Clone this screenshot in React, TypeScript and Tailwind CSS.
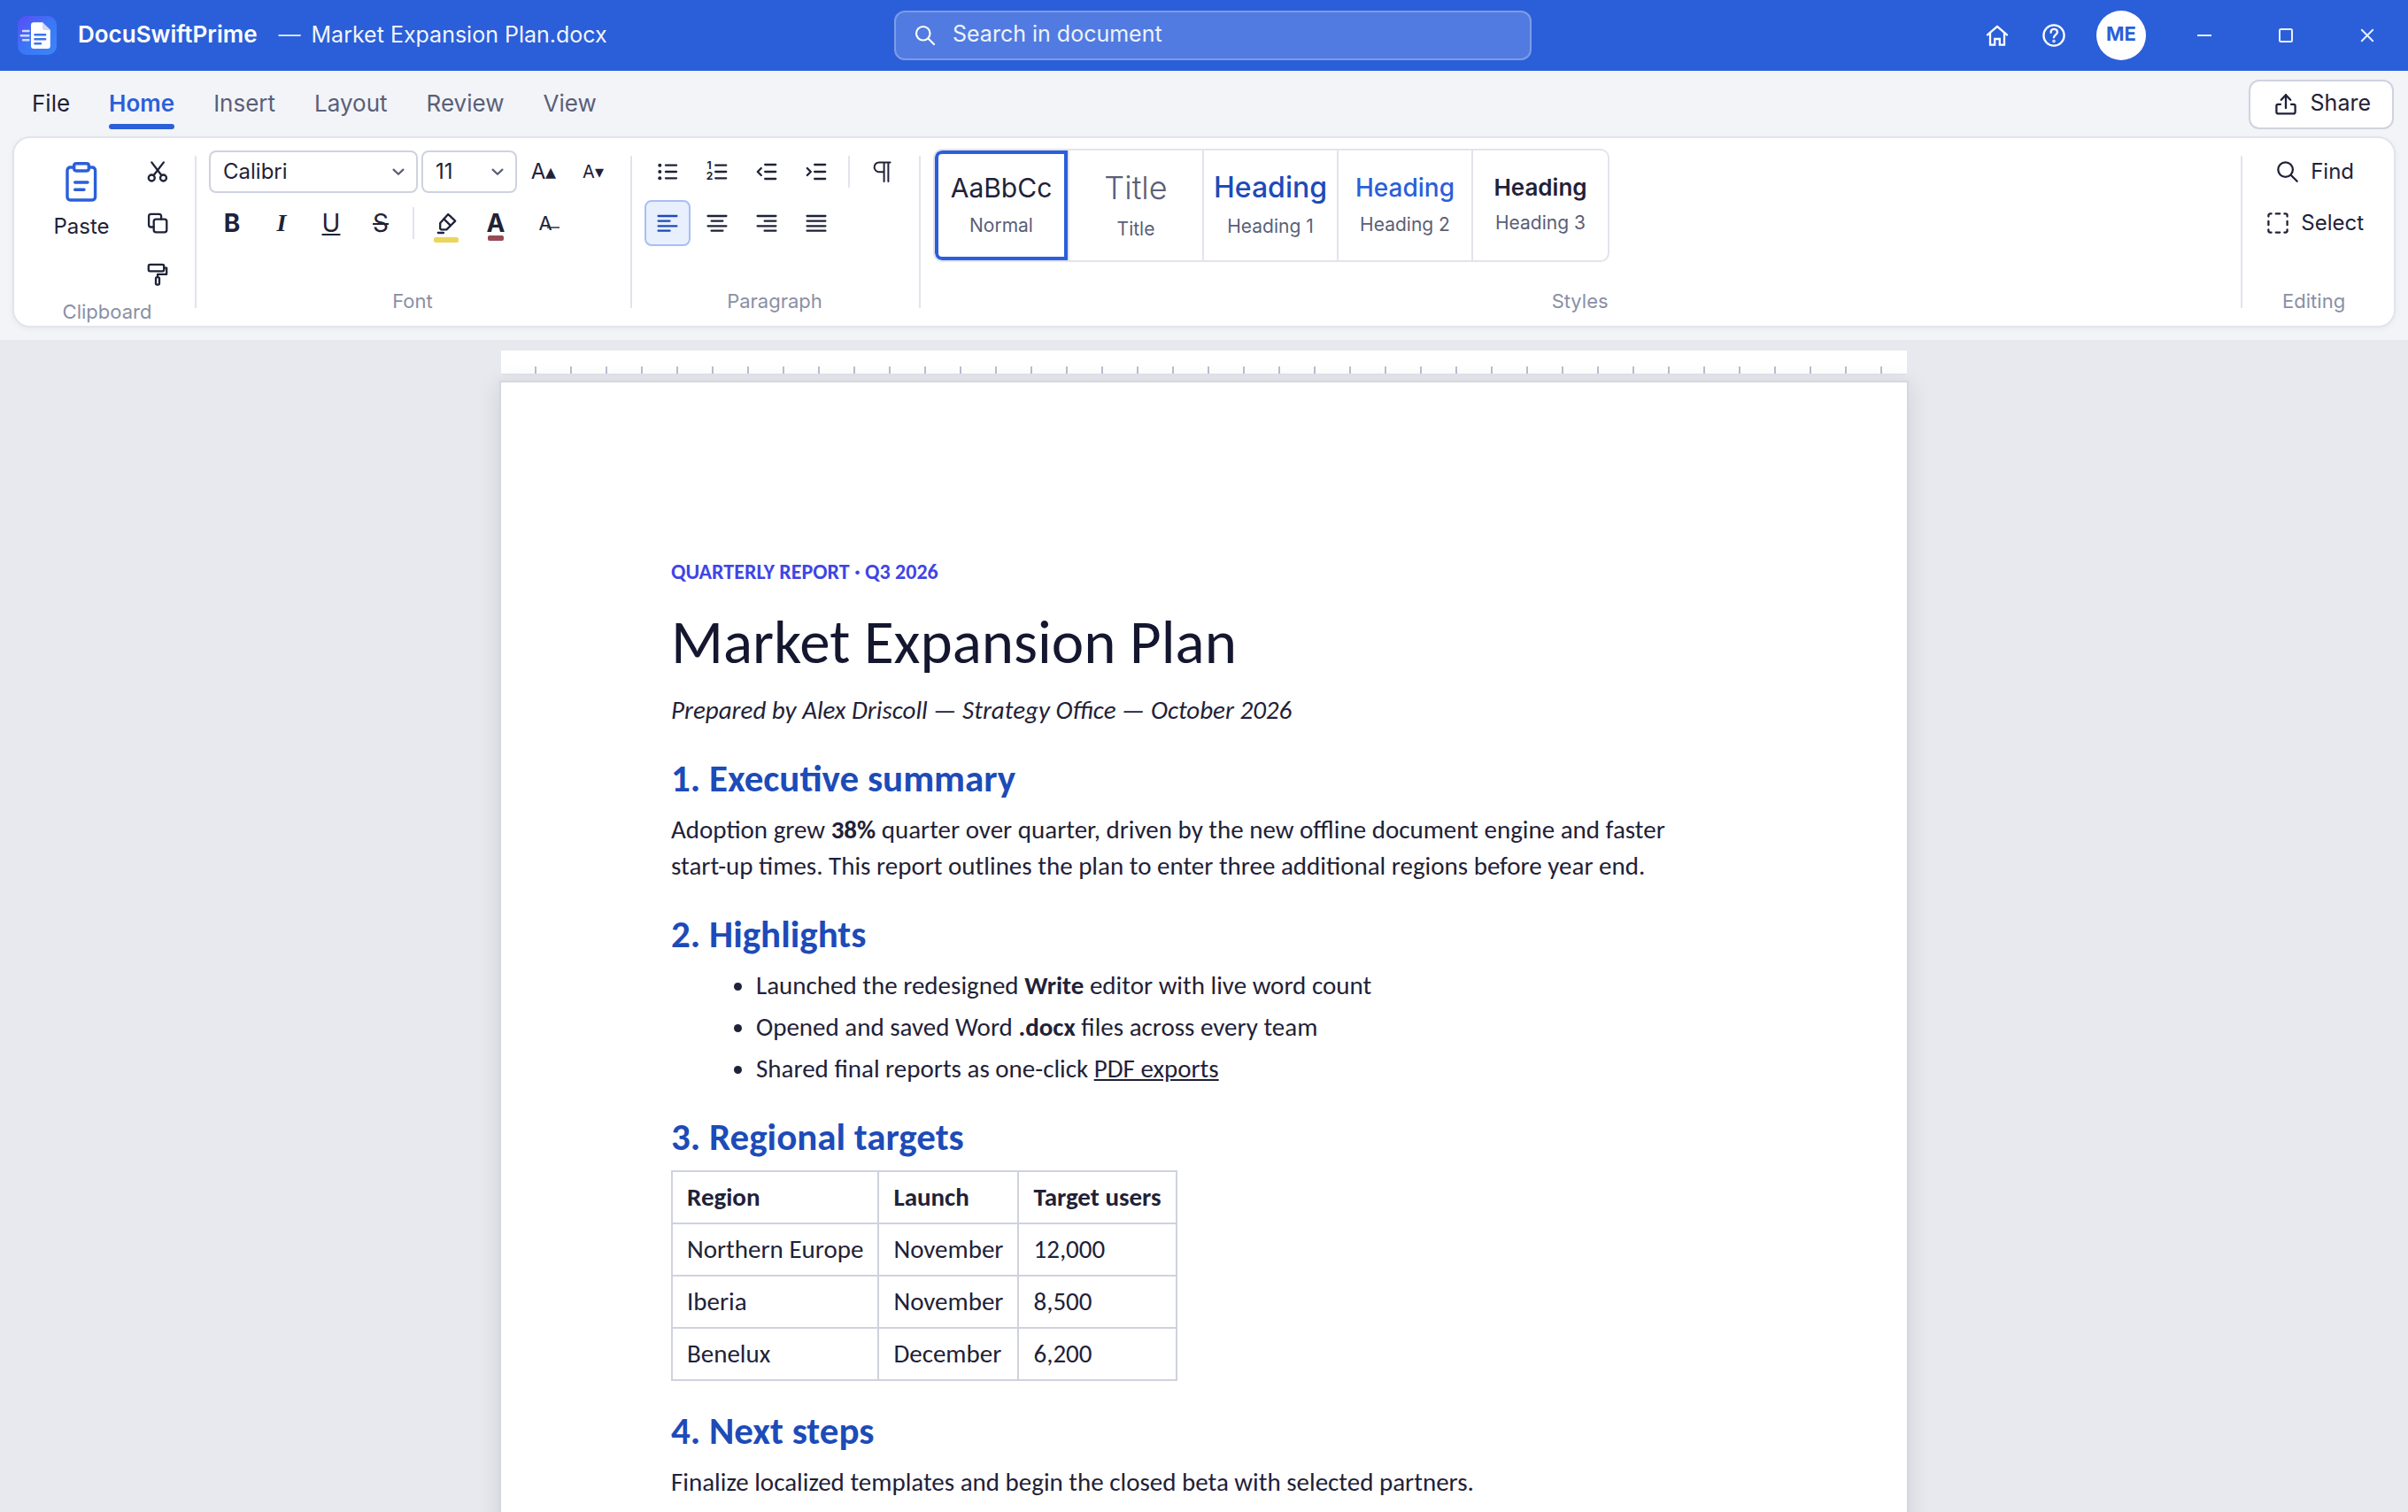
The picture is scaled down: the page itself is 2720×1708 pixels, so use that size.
import type { ReactNode } from "react"

const tabs = ["File", "Home", "Insert", "Layout", "Review", "View"]

const styles = [
  { sample: "AaBbCc", name: "Normal", className: "text-[30px] leading-[42px] text-[#1f2238]" },
  { sample: "Title", name: "Title", className: "text-[36px] leading-[50px] font-light text-[#5a5f78]" },
  { sample: "Heading", name: "Heading 1", className: "text-[32px] leading-[44px] font-medium text-[#1d4bb8]" },
  { sample: "Heading", name: "Heading 2", className: "text-[28px] leading-[40px] font-medium text-[#2b5fd9]" },
  { sample: "Heading", name: "Heading 3", className: "text-[26px] leading-[36px] font-semibold text-[#1f2238]" },
]

const regions = [
  ["Northern Europe", "November", "12,000"],
  ["Iberia", "November", "8,500"],
  ["Benelux", "December", "6,200"],
]

function Icon({ children, className = "size-8" }: { children: ReactNode; className?: string }) {
  return (
    <svg
      viewBox="0 0 32 32"
      fill="none"
      stroke="currentColor"
      strokeWidth="2.3"
      strokeLinecap="round"
      strokeLinejoin="round"
      className={`shrink-0 ${className}`}
      aria-hidden="true"
    >
      {children}
    </svg>
  )
}

function Logo() {
  return (
    <svg viewBox="0 0 44 44" className="size-11 shrink-0" aria-hidden="true">
      <defs>
        <linearGradient id="logo-bg" x1="0" y1="0" x2="1" y2="1">
          <stop offset="0" stopColor="#5b4bf7" />
          <stop offset="0.5" stopColor="#3b76f6" />
          <stop offset="1" stopColor="#3b86fb" />
        </linearGradient>
      </defs>
      <rect width="44" height="44" rx="10" fill="url(#logo-bg)" />
      <g stroke="#fff" strokeOpacity="0.75" strokeWidth="2.4" strokeLinecap="round">
        <path d="M6 17h6.5M3.8 22.3h8.7M6 27.3h6.5" />
      </g>
      <path d="M18 7.3h10l8.8 8.6v18.2a3 3 0 0 1-3 3H18a3 3 0 0 1-3-3V10.3a3 3 0 0 1 3-3Z" fill="#fff" />
      <path d="M28 7.3v6.6a2 2 0 0 0 2 2h6.8Z" fill="#d3d6fa" />
      <g stroke="#3b74ee" strokeWidth="2.4" strokeLinecap="round">
        <path d="M19.4 21.3h11.8M19.4 26.3h11.8M19.4 31.3h6.6" />
      </g>
    </svg>
  )
}

function SearchIcon({ className }: { className?: string }) {
  return (
    <Icon className={className}>
      <circle cx="13.6" cy="13.6" r="8.3" />
      <path d="m19.7 19.7 7 7" />
    </Icon>
  )
}

function Chevron() {
  return (
    <svg
      viewBox="0 0 16 16"
      fill="none"
      stroke="#5a5f78"
      strokeWidth="2.2"
      strokeLinecap="round"
      strokeLinejoin="round"
      className="pointer-events-none absolute right-3.5 top-4 size-4"
      aria-hidden="true"
    >
      <path d="m2.6 5.6 5.4 5.2 5.4-5.2" />
    </svg>
  )
}

function ToolButton({ label, active, children }: { label: string; active?: boolean; children: ReactNode }) {
  return (
    <button
      aria-label={label}
      aria-pressed={active}
      className={`relative flex size-13 items-center justify-center rounded-lg border-2 ${
        active ? "border-[#a9bff2] bg-[#e8effd] text-[#1d4bb8]" : "border-transparent"
      }`}
    >
      {children}
    </button>
  )
}

function Separator() {
  return <span className="mx-1.5 h-9 w-0.5 bg-[#e2e4ec]" />
}

function Divider() {
  return <div className="my-5 w-0.5 shrink-0 bg-[#e2e4ec]" />
}

function Group({ label, className = "pb-3", children }: { label: string; className?: string; children: ReactNode }) {
  return (
    <section aria-label={label} className={`flex flex-col pt-3 pl-3.5 pr-4 ${className}`}>
      <div className="flex-1">{children}</div>
      <div className="text-center text-[22px] leading-8 text-[#8a8fa5]">{label}</div>
    </section>
  )
}

function TitleBar() {
  return (
    <header className="flex h-20 items-center bg-[#2b5fd9] pl-5 text-white">
      <div className="flex flex-1 items-center">
        <Logo />
        <span className="ml-6 pb-0.5 text-[26px] leading-9 font-semibold">DocuSwiftPrime</span>
        <span className="ml-6 pb-0.5 text-[25px] leading-9 text-white/80">—</span>
        <span className="ml-3 pb-0.5 text-[25px] leading-9 text-white/95">Market Expansion Plan.docx</span>
      </div>

      <label className="flex h-14 w-[720px] items-center gap-4 rounded-xl border-2 border-white/25 bg-white/18 px-[18px]">
        <SearchIcon className="size-[30px]" />
        <input
          type="search"
          aria-label="Search in document"
          placeholder="Search in document"
          className="w-full bg-transparent pb-1 text-[25px] leading-9 outline-none placeholder:text-white/90"
        />
      </label>

      <div className="flex flex-1 items-center justify-end">
        <button aria-label="Home" className="flex size-14 items-center justify-center">
          <Icon>
            <path d="M5 15.4 16 5.8l11 9.6" />
            <path d="M8 13.4v13.2h5.2V20h5.6v6.6H24V13.4" strokeLinejoin="miter" />
          </Icon>
        </button>
        <button aria-label="Help" className="ml-2 flex size-14 items-center justify-center">
          <Icon>
            <circle cx="16" cy="16" r="11.6" />
            <path d="M12.6 12.8c0-2.4 1.5-3.9 3.6-3.9s3.7 1.4 3.7 3.4c0 2.8-3.9 3.2-3.9 6" />
            <circle cx="16" cy="22.4" r="0.6" />
          </Icon>
        </button>
        <button
          aria-label="Account"
          className="ml-5 mr-5 flex size-14 items-center justify-center rounded-full bg-white pb-1 text-[22px] leading-8 font-bold text-[#2b5fd9]"
        >
          ME
        </button>
        <div className="flex text-white/90">
          <button aria-label="Minimize" className="flex h-20 w-[92px] items-center justify-center">
            <svg viewBox="0 0 16 16" stroke="currentColor" strokeWidth="2" className="size-4">
              <path d="M0 8h16" />
            </svg>
          </button>
          <button aria-label="Maximize" className="flex h-20 w-[92px] items-center justify-center">
            <svg viewBox="0 0 16 16" fill="none" stroke="currentColor" strokeWidth="2" className="size-4">
              <rect x="1" y="1" width="14" height="14" rx="1.5" />
            </svg>
          </button>
          <button aria-label="Close" className="flex h-20 w-[92px] items-center justify-center">
            <svg viewBox="0 0 16 16" stroke="currentColor" strokeWidth="2" strokeLinecap="round" className="size-4">
              <path d="m1.8 1.8 12.4 12.4M14.2 1.8 1.8 14.2" />
            </svg>
          </button>
        </div>
      </div>
    </header>
  )
}

function TabRow() {
  return (
    <nav className="flex items-center justify-between pt-2.5 pb-2 pl-4 pr-4">
      <div className="flex gap-1">
        {tabs.map((tab) => (
          <button
            key={tab}
            aria-current={tab === "Home" ? "page" : undefined}
            className={`relative h-14 px-5 pb-0.5 text-[26px] leading-9 ${
              tab === "Home"
                ? "font-semibold text-[#2b5fd9] after:absolute after:inset-x-5 after:bottom-0 after:h-1.5 after:rounded-full after:bg-[#2b5fd9]"
                : tab === "File"
                  ? "text-[#1f2238]"
                  : "text-[#5a5f78]"
            }`}
          >
            {tab}
          </button>
        ))}
      </div>
      <button className="flex h-14 items-center gap-3 rounded-xl border-2 border-[#cfd2e0] bg-white px-6 text-[25px] leading-9">
        <Icon>
          <path d="M16 5.2V20M10.8 10.8 16 5.2l5.2 5.6" />
          <path d="M10 15.8H7.2a1.8 1.8 0 0 0-1.8 1.8v7a1.8 1.8 0 0 0 1.8 1.8h17.6a1.8 1.8 0 0 0 1.8-1.8v-7a1.8 1.8 0 0 0-1.8-1.8H22" />
        </Icon>
        <span className="pb-1">Share</span>
      </button>
    </nav>
  )
}

function ClipboardGroup() {
  return (
    <Group label="Clipboard" className="pb-0">
      <div className="flex gap-1.5">
        <button className="flex w-27 flex-col items-center gap-2 pt-3.5 text-[24px] leading-9">
          <svg
            viewBox="0 0 48 48"
            fill="none"
            stroke="#2b5fd9"
            strokeWidth="3.4"
            strokeLinecap="round"
            strokeLinejoin="round"
            className="size-12"
            aria-hidden="true"
          >
            <rect x="8" y="7" width="31.6" height="37" rx="3.4" />
            <rect x="15.7" y="2.7" width="16.6" height="8.3" rx="2.4" fill="#fff" />
            <path d="M16.7 24H31M16.7 32.3H27" />
          </svg>
          Paste
        </button>
        <div className="flex flex-col gap-1.5">
          <ToolButton label="Cut">
            <Icon>
              <circle cx="9.3" cy="23" r="3.5" />
              <circle cx="22.5" cy="23" r="3.5" />
              <path d="M9.3 5.4 20.4 20M22.9 5.4 11.6 20" />
            </Icon>
          </ToolButton>
          <ToolButton label="Copy">
            <Icon>
              <rect x="11.7" y="11.7" width="14.6" height="14.6" rx="2.6" />
              <path d="M11.6 20.5h-3a2.5 2.5 0 0 1-2.5-2.5V8.3a2.5 2.5 0 0 1 2.5-2.5h9a2.5 2.5 0 0 1 2.5 2.5v3.4" />
            </Icon>
          </ToolButton>
          <ToolButton label="Format painter">
            <Icon>
              <rect x="5.8" y="4.8" width="17.4" height="7.6" rx="1.6" />
              <path d="M23.2 8.6h3v7.2H16v3" />
              <rect x="14" y="19.2" width="4" height="8.4" rx="1.6" />
            </Icon>
          </ToolButton>
        </div>
      </div>
    </Group>
  )
}

function FontGroup() {
  return (
    <Group label="Font">
      <div className="flex flex-col gap-1.5">
        <div className="flex items-center gap-1">
          <div className="relative">
            <select
              aria-label="Font family"
              className="h-12 w-59 appearance-none rounded-lg border-2 border-[#cfd2e0] bg-white px-3.5 text-[24px]"
            >
              <option>Calibri</option>
            </select>
            <Chevron />
          </div>
          <div className="relative">
            <select
              aria-label="Font size"
              className="h-12 w-27 appearance-none rounded-lg border-2 border-[#cfd2e0] bg-white px-3.5 text-[24px]"
            >
              <option>11</option>
            </select>
            <Chevron />
          </div>
          <ToolButton label="Grow font">
            <span className="text-[24px] leading-8">A▴</span>
          </ToolButton>
          <ToolButton label="Shrink font">
            <span className="text-[20px] leading-8">A▾</span>
          </ToolButton>
        </div>
        <div className="flex items-center gap-1">
          <ToolButton label="Bold">
            <span className="text-[28px] leading-8 font-bold">B</span>
          </ToolButton>
          <ToolButton label="Italic">
            <span className="font-['Liberation_Serif',serif] text-[28px] leading-8 font-bold italic">I</span>
          </ToolButton>
          <ToolButton label="Underline">
            <span className="text-[28px] leading-8 underline">U</span>
          </ToolButton>
          <ToolButton label="Strikethrough">
            <span className="text-[28px] leading-8 line-through">S</span>
          </ToolButton>
          <Separator />
          <ToolButton label="Highlight color">
            <Icon>
              <path d="m18.2 6 8 7.6-9.8 9.8h-6l-1.2-1V16Z" />
              <path d="m13.4 11.4 7.4 7.2M6.8 27H13" />
            </Icon>
            <span className="absolute bottom-0.5 h-1.5 w-7 rounded-xs bg-[#ecd55b]" />
          </ToolButton>
          <ToolButton label="Font color">
            <span className="text-[28px] leading-8 font-bold">A</span>
            <span className="absolute bottom-1 h-1.5 w-[18px] rounded-xs bg-[#964a56]" />
          </ToolButton>
          <ToolButton label="Clear formatting">
            <span className="text-[22px] leading-8">A</span>
            <span className="absolute top-7 left-[26px] h-0.5 w-3.5 bg-[#1f2238]/70" />
          </ToolButton>
        </div>
      </div>
    </Group>
  )
}

function ParagraphGroup() {
  return (
    <Group label="Paragraph">
      <div className="flex flex-col gap-1.5">
        <div className="flex items-center gap-1">
          <ToolButton label="Bullets">
            <Icon>
              <path d="M14 8.7h12M14 16h12M14 23.3h12" />
              <g fill="currentColor" stroke="none">
                <circle cx="7.3" cy="8.7" r="2" />
                <circle cx="7.3" cy="16" r="2" />
                <circle cx="7.3" cy="23.3" r="2" />
              </g>
            </Icon>
          </ToolButton>
          <ToolButton label="Numbering">
            <Icon>
              <path d="M14.2 8.7h12M14.2 16h12M14.2 23.3h12" />
              <g fill="currentColor" stroke="none" fontSize="12" fontWeight="700">
                <text x="4.6" y="12.8">1</text>
                <text x="3.8" y="24.6">2</text>
              </g>
            </Icon>
          </ToolButton>
          <ToolButton label="Decrease indent">
            <Icon>
              <path d="M14.2 8h12M14.2 16h12M14.2 24h12M9.8 12l-4 4 4 4" />
            </Icon>
          </ToolButton>
          <ToolButton label="Increase indent">
            <Icon>
              <path d="M14.2 8h12M14.2 16h12M14.2 24h12M5.8 12l4 4-4 4" />
            </Icon>
          </ToolButton>
          <Separator />
          <ToolButton label="Show marks">
            <Icon>
              <path d="M25.6 5.4H13a5.4 5.4 0 0 0 0 10.8h5.6M18.6 5.4V27M23.4 5.4V27" strokeWidth="2" />
            </Icon>
          </ToolButton>
        </div>
        <div className="flex items-center gap-1">
          <ToolButton label="Align left" active>
            <Icon>
              <path d="M5.6 8h20.8M5.6 13.6h13M5.6 19.3h20.8M5.6 24.7h13" />
            </Icon>
          </ToolButton>
          <ToolButton label="Align center">
            <Icon>
              <path d="M5.6 8h20.8M9.6 13.6h12.8M5.6 19.3h20.8M9.6 24.7h12.8" />
            </Icon>
          </ToolButton>
          <ToolButton label="Align right">
            <Icon>
              <path d="M5.6 8h20.8M13.6 13.6h12.8M5.6 19.3h20.8M13.6 24.7h12.8" />
            </Icon>
          </ToolButton>
          <ToolButton label="Justify">
            <Icon>
              <path d="M5.6 8h20.8M5.6 13.6h20.8M5.6 19.3h20.8M5.6 24.7h20.8" />
            </Icon>
          </ToolButton>
        </div>
      </div>
    </Group>
  )
}

function StylesGroup() {
  return (
    <Group label="Styles" className="flex-1 pb-3">
      <div className="flex w-fit overflow-hidden rounded-[10px] border-2 border-[#e2e4ec]">
        {styles.map((style) => (
          <button
            key={style.name}
            className={`flex h-31 w-38 flex-col items-center justify-center gap-1 border-r-2 border-[#e2e4ec] last:border-r-0 ${
              style.name === "Normal" ? "rounded-l-lg shadow-[inset_0_0_0_4px_#2b5fd9]" : ""
            }`}
          >
            <span className={style.className}>{style.sample}</span>
            <span className="text-[21px] leading-9 text-[#5a5f78]">{style.name}</span>
          </button>
        ))}
      </div>
    </Group>
  )
}

function EditingGroup() {
  return (
    <Group label="Editing">
      <div className="flex flex-col items-center gap-1.5 text-[24px] leading-8">
        <button className="flex h-13 items-center gap-2.5 px-2.5">
          <SearchIcon />
          <span>Find</span>
        </button>
        <button className="flex h-13 items-center gap-2.5 px-2.5">
          <Icon>
            <path d="M8.6 5.4H7.4a2 2 0 0 0-2 2v1.2M23.4 5.4h1.2a2 2 0 0 1 2 2v1.2M8.6 26.6H7.4a2 2 0 0 1-2-2v-1.2M23.4 26.6h1.2a2 2 0 0 0 2-2v-1.2" />
            <path d="M13.8 5.4h4.4M13.8 26.6h4.4M5.4 13.8v4.4M26.6 13.8v4.4" />
          </Icon>
          <span>Select</span>
        </button>
      </div>
    </Group>
  )
}

function Document() {
  const heading = "mt-[34px] mb-[14px] text-[43px] leading-[46px] font-bold text-[#1d4bb8]"
  const cell = "border-2 border-[#cfd2de] px-4 py-2 text-left"

  return (
    <article className="mt-1.5 w-full max-w-[1592px] border-2 border-[#d5d7e0] bg-white p-48 font-[Carlito,Lato,sans-serif] text-[29px] leading-[41px] text-[#1f2238] shadow-[0_4px_24px_rgba(31,34,56,0.12)]">
      <p>
        <strong className="text-[24px] text-[#3f45e5]">QUARTERLY REPORT · Q3 2026</strong>
      </p>
      <h1 className="mt-6 text-[69px] leading-[72px] text-[#14172f]">Market Expansion Plan</h1>
      <p className="mt-5 italic">Prepared by Alex Driscoll — Strategy Office — October 2026</p>

      <h2 className={heading}>1. Executive summary</h2>
      <p>
        Adoption grew <strong>38%</strong> quarter over quarter, driven by the new offline document engine and faster{" "}
        <span className="whitespace-nowrap">start-up</span> times. This report outlines the plan to enter three
        additional regions before year end.
      </p>

      <h2 className={heading}>2. Highlights</h2>
      <ul className="flex list-disc flex-col gap-1.5 pl-24">
        <li>
          Launched the redesigned <strong>Write</strong> editor with live word count
        </li>
        <li>
          Opened and saved Word <strong>.docx</strong> files across every team
        </li>
        <li>
          Shared final reports as one-click <u>PDF exports</u>
        </li>
      </ul>

      <h2 className={heading}>3. Regional targets</h2>
      <table className="border-collapse">
        <thead>
          <tr>
            <th className={cell}>Region</th>
            <th className={cell}>Launch</th>
            <th className={cell}>Target users</th>
          </tr>
        </thead>
        <tbody>
          {regions.map((row) => (
            <tr key={row[0]}>
              {row.map((value) => (
                <td key={value} className={cell}>
                  {value}
                </td>
              ))}
            </tr>
          ))}
        </tbody>
      </table>

      <h2 className={heading}>4. Next steps</h2>
      <p>Finalize localized templates and begin the closed beta with selected partners.</p>
    </article>
  )
}

export default function App() {
  return (
    <div className="flex h-screen flex-col overflow-hidden bg-[#f3f4f8] font-[Inter,sans-serif] text-[#1f2238]">
      <TitleBar />
      <TabRow />
      <div className="mx-3.5 mb-3.5 flex rounded-[20px] border-2 border-[#e2e4ec] bg-white pr-2 pl-2 shadow-[0_2px_6px_rgba(31,34,56,0.05)]">
        <ClipboardGroup />
        <Divider />
        <FontGroup />
        <Divider />
        <ParagraphGroup />
        <Divider />
        <StylesGroup />
        <Divider />
        <EditingGroup />
      </div>

      <main className="flex min-h-0 flex-1 flex-col items-center overflow-hidden bg-[#e8e9ee] pt-3">
        <div className="flex h-7 w-full max-w-[1588px] shrink-0 flex-col justify-end border-b-2 border-[#e2e4ec] bg-white">
          <div className="h-2 bg-[repeating-linear-gradient(90deg,transparent_0_38px,#b8bfce_38px_40px)]" />
        </div>
        <Document />
      </main>
    </div>
  )
}
